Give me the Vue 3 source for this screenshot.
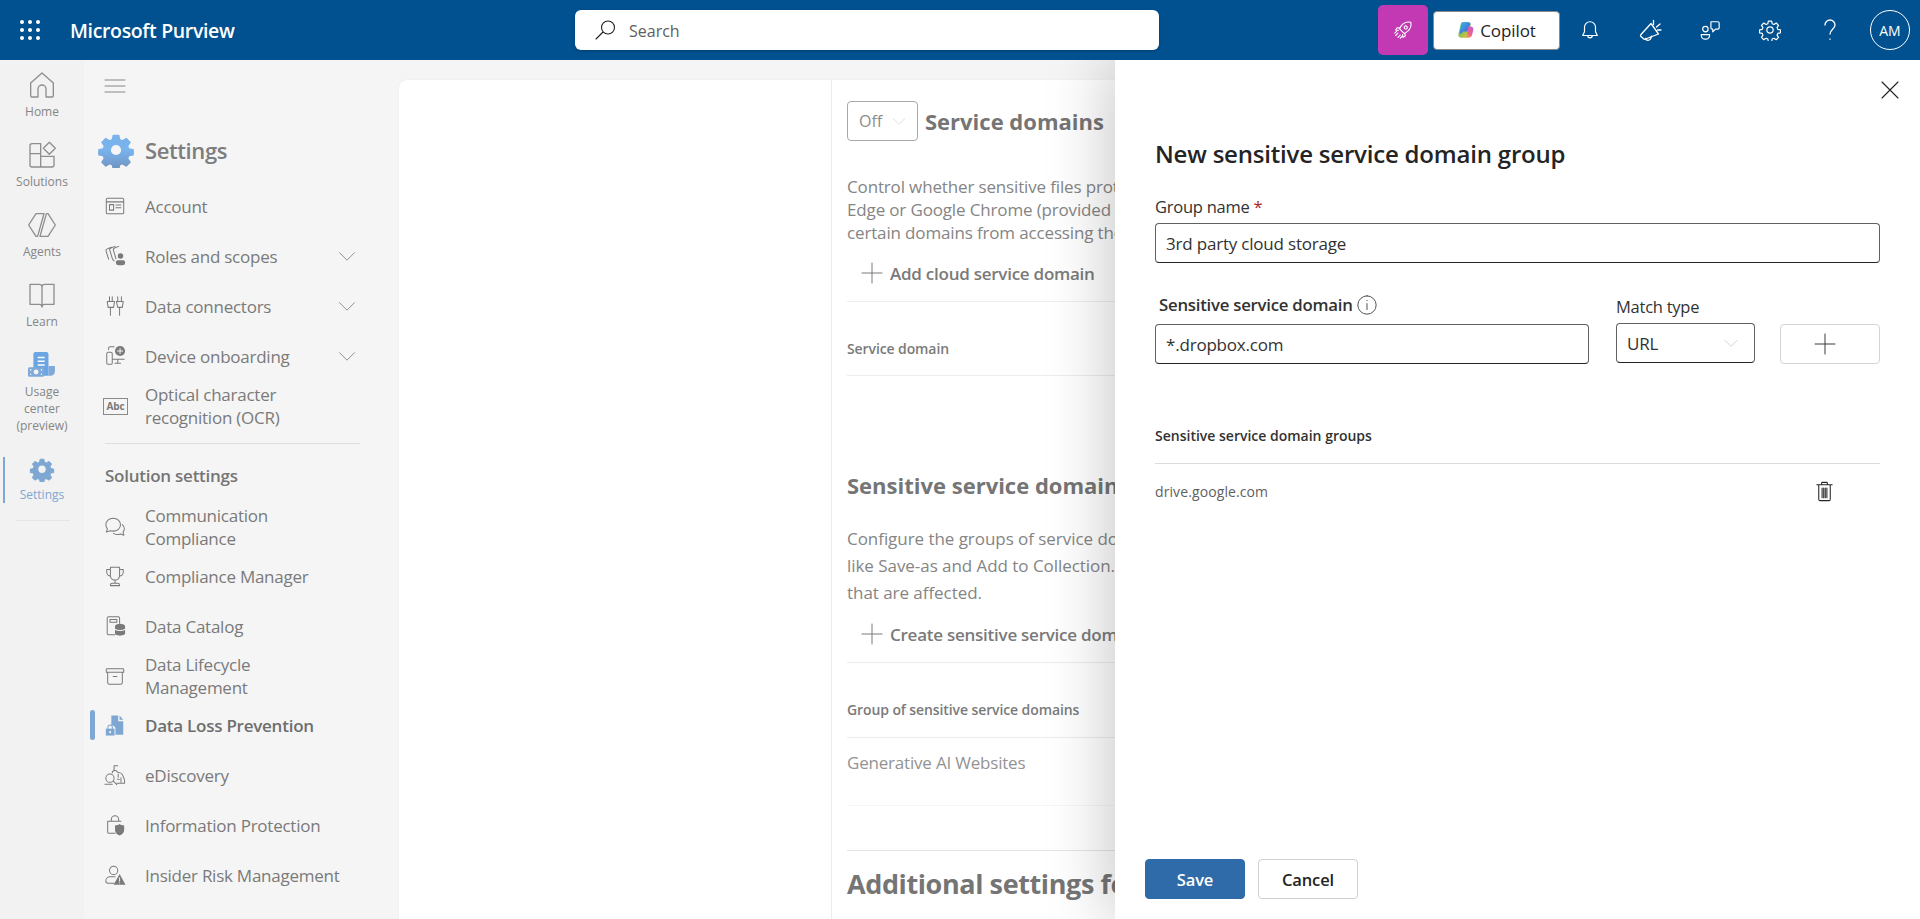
<script setup>
import { h } from 'vue'

const Icon = (props) => {
  const c = props.color || '#7a7a7a'
  return h('svg', { viewBox: '0 0 24 24', width: props.size || 24, height: props.size || 24, fill: 'none', stroke: c, 'stroke-width': props.sw || 1.3, 'stroke-linecap': 'round', 'stroke-linejoin': 'round', class: 'ic' },
    (icons[props.name] || []).map((p) => typeof p === 'string' ? h('path', { d: p }) : h('path', { d: p.d, fill: p.fill || c, stroke: p.stroke === 'self' ? c : (p.stroke || 'none') })))
}
Icon.props = ['name', 'size', 'color', 'sw']

const gearD = 'M10.2 2.3h3.6l.6 2.9 1.9.8 2.5-1.6 2.5 2.5-1.6 2.5.8 1.9 2.9.6v3.2l-2.9.6-.8 1.9 1.6 2.5-2.5 2.5-2.5-1.6-1.9.8-.6 2.9h-3.6l-.6-2.9-1.9-.8-2.5 1.6-2.5-2.5 1.6-2.5-.8-1.9-2.9-.6v-3.2l2.9-.6.8-1.9-1.6-2.5 2.5-2.5 2.5 1.6 1.9-.8z'

const icons = {
  home: ['M3.5 10.5 12 3l8.5 7.5V20a1 1 0 0 1-1 1h-4.5v-6a3 3 0 0 0-6 0v6H4.500a1 1 0 0 1-1-1z'],
  solutions: ['M3 5a1.500 1.500 0 0 1 1.500-1.500H11V11H3zM3 11h8v10H4.500A1.500 1.500 0 0 1 3 19.500zM11 13h10v6.500a1.500 1.500 0 0 1-1.500 1.500H11zM17.500 2.500l4.500 4.500-4.500 4.500L13 7z'],
  agents: ['M13.500 3.500H7.500L2 12l5.500 8.500h1.200zM10.500 20.500h6L22 12l-5.500-8.500h-1.200z'],
  learn: ['M3 4h7a2 2 0 0 1 2 2v15a2 2 0 0 0-2-2H3zM21 4h-7a2 2 0 0 0-2 2v15a2 2 0 0 1 2-2h7z'],
  hamburger: ['M2 6h20M2 12h20M2 18h20'],
  account: ['M4 3.500h16a1.500 1.500 0 0 1 1.500 1.500v14a1.500 1.500 0 0 1-1.500 1.500H4A1.500 1.500 0 0 1 2.500 19V5A1.500 1.500 0 0 1 4 3.500zM2.500 7.500h19M6 10.500h4.500v6H6zM13 11h5.500M13 14h5.500'],
  roles: ['M8 2.500 3.500 4.200c-1.200.5-1.600 1.300-1.200 2.500L5 15.500M12 1.500 7.500 3.200c-1.200.5-1.600 1.300-1.200 2.500l3 9.800 1.700 1.800M16 1.500l-4.500 1.700c-1.200.5-1.600 1.300-1.200 2.500l2.700 9.300', { d: 'M18 9a3 3 0 1 1 0 6 3 3 0 0 1 0-6zM13 18.300c0-1 1-1.800 2-1.800h6c1 0 2 .8 2 1.800v1.200c0 1.500-1.500 2.500-3 2.500h-4c-1.500 0-3-1-3-2.500z' }],
  connectors: ['M6 2v5M9 2v5M3.500 7h8l-1 6.500H4.500zM7 13.500V22M15 2v5M19 2v5M13.500 7H21l-1 6.500h-5zM17 13.500V22'],
  device: ['M3 9.500a1.500 1.500 0 0 1 1.500-1.500h3A1.500 1.500 0 0 1 9 9.500v10A1.500 1.500 0 0 1 7.500 21h-3A1.500 1.500 0 0 1 3 19.500zM5 5V3.500A1.500 1.500 0 0 1 6.500 2H11M9 15.500h13M15 15.500V20M12 20h6', { d: 'M17.500 1a5.500 5.500 0 1 1 0 11 5.500 5.500 0 0 1 0-11z' }, { d: 'M17.500 3.700v5.600M14.700 6.500h5.600', fill: 'none', stroke: '#f5f5f5' }],
  chat: ['M10 2.500c4.500 0 8 3 8 7s-3.500 7-8 7c-1 0-2-.2-3-.5L2.500 17.500l1.200-3.800C2.500 12.500 2 11 2 9.500c0-4 3.500-7 8-7zM20 9.500c1.300 1.200 2.200 2.700 2.200 4.300 0 1.400-.6 2.700-1.500 3.700l1 3.500-3.800-1.300c-2.500 1-5.300.6-7.500-.8'],
  trophy: ['M7 2.500h10v9a5 5 0 0 1-10 0zM7 5H3v3a4 4 0 0 0 4 4M17 5h4v3a4 4 0 0 1-4 4M12 16.500V20M7 22.500V22a2 2 0 0 1 2-2h6a2 2 0 0 1 2 2v.5z'],
  catalog: ['M12 21.500H5a1.500 1.500 0 0 1-1.500-1.500V3.500A1.500 1.500 0 0 1 5 2h10.500A1.500 1.500 0 0 1 17 3.500V9M6.500 5h7.500v3H6.500z', { d: 'M12 12c0-1.400 2.500-2.500 5.500-2.500S23 10.600 23 12v8c0 1.400-2.500 2.500-5.500 2.500S12 21.400 12 20z' }, { d: 'M12 15.500c1 1 3 1.500 5.500 1.500s4.500-.5 5.500-1.500', fill: 'none', stroke: '#f5f5f5' }],
  archive: ['M3.500 4h17a1 1 0 0 1 1 1v3h-19V5a1 1 0 0 1 1-1zM4 8v11a2 2 0 0 0 2 2h12a2 2 0 0 0 2-2V8M10 12.500h4'],
  dlp: [{ d: 'M8 1.500h7.500v6.500H21v14.500H12.500V16a3.500 3.500 0 0 0-4.500-3.300z' }, { d: 'M17 1.500l4 4.800h-4z' }, { d: 'M2 16h9.500v7.500H2z' }, { d: 'M4.300 16v-1.700a2.400 2.400 0 0 1 4.800 0V16', fill: 'none', stroke: 'self' }, { d: 'M6.700 18.500a1.200 1.200 0 1 1 0 2.400 1.200 1.200 0 0 1 0-2.400z', fill: '#f5f5f5' }],
  ediscovery: ['M11 2h4M11 2v5M9 9.500c0-1.500 1-2.500 3-2.500s2.500 1 3 2c3 0 5.500 2.500 6 5 1 1 1.500 3 1.500 7H14', 'M6.500 11a4.500 4.500 0 1 1 0 9 4.500 4.500 0 0 1 0-9zM10 18.500 14 22.500M1 22h8M15.500 11v3.500M18.500 15v5M14.500 16.500l2 .5'],
  infoprot: ['M8 8V6a4 4 0 0 1 8 0v2M4 8h14.500M4 8v11.500A1.500 1.500 0 0 0 5.500 21H12', { d: 'M17 11c1.500 1.200 3 1.500 5 1.500v5c0 3-2.500 5-5 6-2.500-1-5-3-5-6v-5c2 0 3.500-.3 5-1.500z' }],
  insider: ['M10.500 2.500a4.500 4.500 0 1 1 0 9 4.500 4.500 0 0 1 0-9zM11 21H4.500C3 21 2 20 2 18.500 2 16 4 14 6.500 14H12', { d: 'M17 11l6.500 11.500h-13z' }, { d: 'M17 15v3.500M17 20.500v.3', fill: 'none', stroke: '#f5f5f5' }],
  plus: ['M12 2v20M2 12h20'],
  chev: ['M3 8l9 9 9-9'],
  close: ['M4 4l16 16M20 4 4 20'],
  search: ['M15 3a6.500 6.500 0 1 1 0 13 6.500 6.500 0 0 1 0-13zM10 14 3 21'],
  rocket: ['M20.500 3.500c-4-.8-7.500.5-10 3.500L8 10.500l5.500 5.500 3.500-2.500c3-2.500 4.300-6 3.500-10z', 'M15 7.500a1.700 1.700 0 1 1 0 3.400 1.700 1.700 0 0 1 0-3.400zM8.500 10 5.500 9.500 4 12l3 .5M14 15.500l.5 3-2.500 1.500-.5-3M6.500 15.500l-2.500 2.500M9 17.500l-2.500 2.500M5 13.500l-2 2M11 19l-2 2'],
  bell: ['M12 3a6 6 0 0 1 6 6v5l2 4H4l2-4V9a6 6 0 0 1 6-6zM9.500 18a2.500 2.500 0 0 0 5 0'],
  megaphone: ['M13 5.500 3 16.500c-.7.8-.6 1.500 0 2l2.500 2.300c.7.600 1.400.5 2 .2l13-5zM7.500 20.500c.5 2.500 4.500 2.800 5.500 -.5l.3-1.800M15.500 6.500V2.500M18.500 9l3.500-3M19.500 12H23'],
  people: ['M7 8a3 3 0 1 1 0 6 3 3 0 0 1 0-6zM2.500 17h9v1a4 4 0 0 1-4 4h-1a4 4 0 0 1-4-4zM13 3h7.500A1.500 1.500 0 0 1 22 4.500v5a1.500 1.500 0 0 1-1.500 1.500H18l-3 3v-3h-.5A1.500 1.500 0 0 1 13 9.500z'],
  gear: [gearD, 'M12 8.500a3.500 3.500 0 1 1 0 7 3.500 3.500 0 0 1 0-7z'],
  help: ['M7 7a5 5 0 0 1 10 0c0 4-5 4.500-5 9M12 21v.3'],
  trash: ['M4 5h16M9 5V3.500A1 1 0 0 1 10 2.500h4a1 1 0 0 1 1 1V5M6 5v15a1.500 1.500 0 0 0 1.500 1.500h9A1.500 1.500 0 0 0 18 20V5M9.500 8.500v10M11.200 8.500v10M12.800 8.500v10M14.500 8.500v10'],
  info: ['M12 2a10 10 0 1 1 0 20 10 10 0 0 1 0-20zM12 10.500V17M12 7v.3']
}

const rail = [
  { label: 'Home', icon: 'home' },
  { label: 'Solutions', icon: 'solutions' },
  { label: 'Agents', icon: 'agents' },
  { label: 'Learn', icon: 'learn' }
]

const top = [
  { t: ['Account'], i: 'account' },
  { t: ['Roles and scopes'], i: 'roles', chev: true },
  { t: ['Data connectors'], i: 'connectors', chev: true },
  { t: ['Device onboarding'], i: 'device', chev: true }
]
const sol = [
  { t: ['Communication', 'Compliance'], i: 'chat' },
  { t: ['Compliance Manager'], i: 'trophy' },
  { t: ['Data Catalog'], i: 'catalog' },
  { t: ['Data Lifecycle', 'Management'], i: 'archive' },
  { t: ['Data Loss Prevention'], i: 'dlp', active: true },
  { t: ['eDiscovery'], i: 'ediscovery' },
  { t: ['Information Protection'], i: 'infoprot' },
  { t: ['Insider Risk Management'], i: 'insider' }
]
const waffle = Array.from({ length: 9 })
</script>

<template>
  <div class="page">
    <header class="bar">
      <div class="waffle"><i v-for="(_, n) in waffle" :key="n"></i></div>
      <div class="brand">Microsoft Purview</div>
      <div class="search">
        <Icon name="search" :size="24" color="#1f1f1f" :sw="1.1" />
        <span>Search</span>
      </div>
      <div class="bar-right">
        <div class="rocket"><Icon name="rocket" :size="22" color="#fff" :sw="1.2" /></div>
        <div class="copilot">
          <svg width="17" height="18" viewBox="0 0 24 24">
            <defs>
              <linearGradient id="cpa" x1="0" y1="0" x2="1" y2="1"><stop offset="0" stop-color="#39b7e8" /><stop offset=".6" stop-color="#3f7fe0" /><stop offset="1" stop-color="#7b5be0" /></linearGradient>
              <linearGradient id="cpb" x1="0" y1="1" x2="1" y2="0"><stop offset="0" stop-color="#f6b23c" /><stop offset=".5" stop-color="#ee5f8e" /><stop offset="1" stop-color="#b25be0" /></linearGradient>
              <linearGradient id="cpc" x1="0" y1="0" x2="1" y2="1"><stop offset="0" stop-color="#35c27a" /><stop offset="1" stop-color="#f2c12e" /></linearGradient>
            </defs>
            <path d="M8 1h8c2 0 3 1 3.500 3L15 20c-.6 2-2 3-4 3H6C3 23 1.500 21 2 18L5 5c.4-2.500 1.500-4 3-4z" fill="url(#cpc)" />
            <path d="M8 1h8c1.500 0 2.500.8 3 2l-4 11H8.500l-2 3H3.500L6 4c.4-2 1-3 2-3z" fill="url(#cpa)" />
            <path d="M16 7h3c3 0 4.500 2 4 5l-1.500 6c-.6 3-2.500 5-5.500 5h-6c2 0 3.300-1.200 4-3z" fill="url(#cpb)" />
          </svg>
          <span>Copilot</span>
        </div>
        <button class="tb"><Icon name="bell" :size="22" color="#fff" /></button>
        <button class="tb"><Icon name="megaphone" :size="24" color="#fff" /></button>
        <button class="tb"><Icon name="people" :size="22" color="#fff" /></button>
        <button class="tb"><Icon name="gear" :size="22" color="#fff" /></button>
        <button class="tb"><Icon name="help" :size="24" color="#fff" /></button>
        <div class="avatar">AM</div>
      </div>
    </header>

    <div class="body">
      <aside class="rail">
        <div v-for="r in rail" :key="r.icon" class="rail-item">
          <Icon :name="r.icon" :size="32" color="#8e8e8e" :sw="1" />
          <span>{{ r.label }}</span>
        </div>
        <div class="rail-item usage">
          <svg width="28" height="28" viewBox="0 0 26 26">
            <path d="M5 3a2 2 0 0 1 2-2h10a2 2 0 0 1 2 2v20H5z" fill="#6ba5e3" />
            <path d="M9 6h6.500M9 9.500h6.500M9 13h6.500" stroke="#fff" stroke-width="1.300" fill="none" />
            <path d="M19 14h6v5a4 4 0 0 1-4 4h-2z" fill="#7ea9d8" />
            <rect x="0" y="15" width="15" height="9" rx="1.500" fill="#7ea9d8" />
            <circle cx="7.500" cy="19.500" r="2.300" fill="#f2f2f2" />
            <path d="M2.500 17.500v.1M12.500 21.500v.1M2.500 21.500v.1M12.500 17.500v.1" stroke="#f2f2f2" stroke-width="1.400" stroke-linecap="round" />
          </svg>
          <span>Usage<br />center<br />(preview)</span>
        </div>
        <div class="rail-item settings">
          <svg width="26" height="26" viewBox="0 0 24 24"><path :d="gearD" fill="#7ea7d3" stroke="#7ea7d3" stroke-width="1" stroke-linejoin="round" /><circle cx="12" cy="12" r="3.600" fill="#f2f2f2" /></svg>
          <span>Settings</span>
        </div>
        <div class="rail-sep"></div>
      </aside>

      <nav class="nav">
        <div class="ham"><Icon name="hamburger" :size="24" color="#7c7c7c" :sw="0.9" /></div>
        <div class="nav-title">
          <svg width="36" height="36" viewBox="0 0 24 24">
            <defs><linearGradient id="gg" x1="0" y1="0" x2="0" y2="1"><stop offset=".45" stop-color="#79b3ec" /><stop offset="1" stop-color="#6f93bf" /></linearGradient></defs>
            <path :d="gearD" fill="url(#gg)" stroke="url(#gg)" stroke-width="1" stroke-linejoin="round" /><circle cx="12" cy="12" r="3.400" fill="#f5f5f5" />
          </svg>
          <span>Settings</span>
        </div>
        <div v-for="x in top" :key="x.i" class="nav-item">
          <span class="nav-ic"><Icon :name="x.i" :size="22" color="#7a7a7a" :sw="1.1" /></span>
          <span class="nav-t">{{ x.t[0] }}</span>
          <span v-if="x.chev" class="nav-chev"><Icon name="chev" :size="20" color="#7a7a7a" :sw="1" /></span>
        </div>
        <div class="nav-item two ocr">
          <span class="nav-ic"><span class="abc">Abc</span></span>
          <span class="nav-t">Optical character<br />recognition (OCR)</span>
        </div>
        <div class="nav-sep"></div>
        <div class="nav-head">Solution settings</div>
        <div v-for="x in sol" :key="x.i" class="nav-item" :class="{ two: x.t.length > 1, active: x.active }">
          <span v-if="x.active" class="nav-mark"></span>
          <span class="nav-ic"><Icon :name="x.i" :size="22" :color="x.active ? '#7ea7d3' : '#7a7a7a'" :sw="1.1" /></span>
          <span class="nav-t"><template v-for="(l, k) in x.t" :key="k">{{ l }}<br v-if="k < x.t.length - 1" /></template></span>
        </div>
      </nav>

      <main class="main">
        <div class="card">
          <div class="detail">
            <div class="head-row">
              <div class="off"><span>Off</span><Icon name="chev" :size="16" color="#cfcfcf" :sw="1" /></div>
              <h2 class="h20">Service domains</h2>
            </div>
            <p class="p23">Control whether sensitive files protected<br />Edge or Google Chrome (provided they<br />certain domains from accessing them</p>
            <div class="action"><Icon name="plus" :size="24" color="#7a7a7a" :sw="1" /><span>Add cloud service domain</span></div>
            <div class="thead t73">Service domain</div>
            <h2 class="h20 sens">Sensitive service domain</h2>
            <p class="p27">Configure the groups of service domains<br />like Save-as and Add to Collection. Then<br />that are affected.</p>
            <div class="action a2"><Icon name="plus" :size="24" color="#7a7a7a" :sw="1" /><span>Create sensitive service domain</span></div>
            <div class="thead t74">Group of sensitive service domains</div>
            <div class="trow">Generative AI Websites</div>
            <div class="hr"></div>
            <h1 class="h28">Additional settings for</h1>
          </div>
        </div>
      </main>

      <section class="panel">
        <button class="close"><Icon name="close" :size="24" color="#242424" :sw="1.100" /></button>
        <div class="panel-in">
          <h1 class="p-title">New sensitive service domain group</h1>
          <label class="lbl g">Group name <b>*</b></label>
          <div class="inp">3rd party cloud storage</div>
          <div class="fields">
            <div class="c1">
              <div class="lbl s">Sensitive service domain <Icon name="info" :size="22" color="#424242" :sw="1" /></div>
              <div class="inp">*.dropbox.com</div>
            </div>
            <div class="c2">
              <div class="lbl m">Match type</div>
              <div class="inp sel"><span>URL</span><Icon name="chev" :size="16" color="#bdbdbd" :sw="1" /></div>
            </div>
            <div class="c3">
              <button class="addbtn"><Icon name="plus" :size="24" color="#3a3a3a" :sw="1" /></button>
            </div>
          </div>
          <div class="g-head">Sensitive service domain groups</div>
          <div class="g-row">
            <span>drive.google.com</span>
            <Icon name="trash" :size="23" color="#242424" :sw="1.100" />
          </div>
        </div>
        <div class="foot">
          <button class="btn pri">Save</button>
          <button class="btn">Cancel</button>
        </div>
      </section>
    </div>
  </div>
</template>

<style>
html, body { margin: 0; padding: 0; overflow: hidden; background: #f5f5f5; }
</style>

<style scoped>
* { box-sizing: border-box; }
.page {
  width: 1920px; height: 919px; overflow: hidden; position: relative;
  font-family: "Open Sans", "Noto Sans", "Liberation Sans", sans-serif;
  display: flex; flex-direction: column; color: #7a7a7a;
}
.ic { display: block; flex: none; }
button { font: inherit; background: none; border: 0; padding: 0; cursor: pointer; }

.bar { height: 60px; flex: none; background: #01508f; display: flex; align-items: center; position: relative; z-index: 5; color: #fff; }
.waffle { margin-left: 20px; width: 20px; display: grid; grid-template-columns: repeat(3, 4px); gap: 4px; }
.waffle i { width: 4px; height: 4px; border-radius: 50%; background: #fff; display: block; }
.brand { margin-left: 30px; width: 505px; font-size: 19.500px; font-weight: 600; letter-spacing: -0.35px; }
.search { width: 584px; height: 40px; background: #fff; border-radius: 6px; display: flex; align-items: center; padding-left: 18px; gap: 12px; color: #5e5e5e; font-size: 16px; box-shadow: 0 1px 3px rgba(0,0,0,.2); }
.search span { margin-top: 2px; }
.bar-right { margin-left: 219px; display: flex; align-items: center; }
.rocket { width: 50px; height: 50px; background: #c239b3; border-radius: 5px; display: flex; align-items: center; justify-content: center; }
.copilot { margin-left: 5px; width: 127px; height: 39px; background: #fff; border: 1px solid #8a8a8a; border-radius: 4px; display: flex; align-items: center; justify-content: center; gap: 6px; color: #242424; font-size: 17px; font-weight: 500; letter-spacing: -0.1px; }
.tb { width: 60px; height: 50px; display: flex; align-items: center; justify-content: center; }
.avatar { margin-left: 10px; width: 40px; height: 40px; border: 1px solid #fff; border-radius: 50%; display: flex; align-items: center; justify-content: center; font-size: 14px; color: #fff; }

.body { flex: 1; display: flex; position: relative; min-height: 0; }
.rail { width: 84px; flex: none; background: #f2f2f2; padding-top: 8.500px; display: flex; flex-direction: column; align-items: center; position: relative; }
.rail-item { width: 84px; height: 70px; display: flex; flex-direction: column; align-items: center; font-size: 12px; line-height: 17px; color: #858585; text-align: center; }
.rail-item span { margin-top: 2px; }
.usage { height: 106px; margin-top: 2.500px; }
.usage span { margin-top: 3.500px; }
.settings { height: 46px; color: #7ea7d3; position: relative; }
.settings::before { content: ""; position: absolute; left: 3px; top: 0; width: 2px; height: 46px; background: #7ea7d3; }
.settings span { margin-top: 4.500px; }
.rail-sep { width: 55px; height: 1px; background: #e6e6e6; margin-top: 17px; }

.nav { width: 315px; flex: none; background: #f5f5f5; padding-top: 14px; font-size: 17px; color: #7a7a7a; }
.ham { margin-left: 19px; height: 24px; width: 24px; }
.nav-title { display: flex; align-items: center; margin-left: 14px; margin-top: 33px; height: 38px; gap: 11px; font-size: 22px; font-weight: 600; color: #7d7d7d; letter-spacing: -0.4px; }
.nav-item { position: relative; height: 50px; display: flex; align-items: center; letter-spacing: -0.25px; }
.nav-title + .nav-item { margin-top: 12px; }
.nav-item.two { height: 48px; margin-top: 1px; margin-bottom: 0; line-height: 23px; }
.nav-ic { width: 61px; padding-left: 20px; flex: none; }
.nav-t { flex: 1; }
.nav-chev { margin-right: 42px; }
.nav-mark { position: absolute; left: 6px; top: 10px; width: 5px; height: 30px; border-radius: 3px; background: #7ea7d3; }
.active { font-weight: 600; color: #6e6e6e; }
.abc { display: block; margin-left: -1px; width: 25px; height: 17px; border: 1.500px solid #8a8a8a; font-size: 10px; font-weight: 700; line-height: 14px; text-align: center; letter-spacing: -.2px; }
.nav-sep { margin: 13px 39px 0 21px; height: 1px; background: #dedede; }
.nav-head { margin-left: 21px; margin-top: 20px; margin-bottom: 15px; height: 24px; line-height: 24px; font-weight: 600; color: #757575; letter-spacing: -0.25px; }

.main { flex: 1; min-width: 0; padding-top: 20px; background: #f5f5f5; }
.card { height: 100%; background: #fff; border-radius: 8px 0 0 0; padding-left: 432px; box-shadow: 0 0 2px rgba(0,0,0,.06); overflow: hidden; }
.detail { border-left: 1px solid #ececec; padding-left: 15px; height: 100%; width: 600px; overflow: hidden; font-size: 17px; white-space: nowrap; }
.head-row { display: flex; align-items: center; gap: 7px; height: 40px; margin-top: 21px; }
.off { width: 71px; height: 40px; border: 1px solid #a8a8a8; border-radius: 4px; display: flex; align-items: center; gap: 9px; padding-left: 11px; color: #8c8c8c; font-size: 16px; }
h1, h2, p { margin: 0; font-weight: 700; }
.h20 { font-size: 22px; line-height: 28px; color: #757575; }
.p23 { margin-top: 34px; font-weight: 400; line-height: 23px; color: #858585; letter-spacing: -0.15px; }
.action { margin-top: 9px; height: 40px; display: flex; align-items: center; gap: 6px; padding-left: 13px; font-weight: 600; color: #7a7a7a; letter-spacing: -0.25px; }
.thead { border-top: 1px solid #ececec; margin-top: 8px; border-bottom: 1px solid #ececec; padding-top: 36px; line-height: 22px; font-size: 14px; font-weight: 600; color: #7a7a7a; letter-spacing: -0.1px; }
.t73 { height: 75px; }
.t74 { height: 76px; }
.sens { margin-top: 95px; }
.p27 { margin-top: 26px; font-weight: 400; line-height: 27px; color: #858585; letter-spacing: -0.05px; }
.a2 { margin-top: 8px; }
.trow { height: 68px; padding-top: 14px; line-height: 22px; color: #939393; font-weight: 500; border-bottom: 1px solid #f6f6f6; letter-spacing: -0.2px; }
.hr { margin-top: 44px; height: 1px; background: #e4e4e4; }
.h28 { margin-top: 14px; font-size: 27px; line-height: 38px; color: #757575; letter-spacing: -0.4px; }

.panel { position: absolute; left: 1115px; top: 0; right: 0; bottom: 0; background: #fff; box-shadow: -6px 0 60px rgba(0,0,0,.22); display: flex; flex-direction: column; z-index: 3; color: #242424; }
.close { position: absolute; right: 18px; top: 18px; }
.panel-in { padding: 78px 40px 0; flex: 1; }
.p-title { font-size: 24px; line-height: 32px; font-weight: 600; letter-spacing: -0.2px; }
.lbl { font-size: 16.500px; line-height: 22px; letter-spacing: -0.25px; color: #323232; }
.lbl.g { display: block; margin-top: 26px; margin-bottom: 5px; }
.lbl b { color: #a4262c; font-weight: 400; }
.inp { height: 40px; border: 1px solid #616161; border-bottom-color: #242424; border-radius: 4px; padding-left: 10px; font-size: 17px; line-height: 39px; color: #323232; letter-spacing: -0.2px; }
.fields { display: flex; margin-top: 31px; height: 70px; }
.c1 { width: 434px; }
.lbl.s { padding-left: 4px; margin-bottom: 8px; font-weight: 600; font-size: 16.800px; display: flex; align-items: center; gap: 3px; }
.c2 { width: 139px; margin-left: 27px; padding-top: 2px; }
.lbl.m { margin-bottom: 5px; }
.sel { display: flex; align-items: center; justify-content: space-between; padding-right: 15px; }
.c3 { width: 100px; margin-left: 25px; padding-top: 30px; }
.addbtn { width: 100px; height: 40px; border: 1px solid #d4d4d4; border-radius: 4px; display: flex; align-items: center; justify-content: center; padding-right: 10px; }
.g-head { margin-top: 62px; padding-bottom: 17px; line-height: 20px; font-size: 14px; font-weight: 600; letter-spacing: 0; color: #323232; border-bottom: 1px solid #dcdcdc; }
.g-row { display: flex; align-items: center; justify-content: space-between; padding-right: 44px; height: 54px; font-size: 14px; color: #616161; letter-spacing: 0.1px; }
.foot { display: flex; gap: 13px; padding: 0 0 20px 30px; }
.btn { width: 100px; height: 40px; border: 1px solid #d1d1d1; border-radius: 4px; background: #fff; font-size: 16.500px; font-weight: 600; color: #242424; letter-spacing: -0.1px; }
.pri { background: #2f6ba8; border-color: #2f6ba8; color: #fff; }
</style>
